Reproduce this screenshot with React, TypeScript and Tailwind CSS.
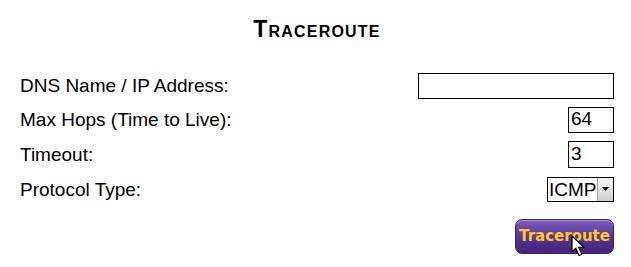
import React from "react";

const LABEL = "text-[19px] leading-none text-black";

function Row({ label, children, className = "" }: { label: string; children: React.ReactNode; className?: string }) {
  return (
    <div className={`flex items-center justify-between ${className}`}>
      <span className={LABEL}>{label}</span>
      {children}
    </div>
  );
}

function Cursor() {
  return (
    <svg className="pointer-events-none absolute left-[55px] top-[15px]" width="15" height="22" viewBox="0 0 15 22">
      <path d="M1 1 L1 17 L4.8 13.3 L8 20.5 L10.8 19.3 L7.7 12.3 L13 12.3 Z" fill="#fff" stroke="#000" strokeWidth="1.2" strokeLinejoin="round" />
    </svg>
  );
}

export default function App() {
  return (
    <div className="h-[267px] w-[631px] bg-white pl-[20px] pr-[17px] pt-[12px]" style={{ fontFamily: '"Liberation Sans", Arial, sans-serif' }}>
      <h1 className="text-center text-[23px] font-bold tracking-[1.2px] text-black [font-variant:small-caps]">Traceroute</h1>

      <div className="mt-[26px] flex flex-col gap-[8px]">
        <Row label="DNS Name / IP Address:">
          <input className="h-[26px] w-[196px] border border-black px-[2px] text-[19px] outline-none" defaultValue="" />
        </Row>
        <Row label="Max Hops (Time to Live):">
          <input className="h-[26px] w-[46px] border border-black px-[2px] text-[19px] outline-none" defaultValue="64" />
        </Row>
        <Row label="Timeout:">
          <input className="h-[27px] w-[46px] border border-black px-[2px] text-[19px] outline-none" defaultValue="3" />
        </Row>
        <Row label="Protocol Type:" className="mt-[1px]">
          <div className="flex h-[25px] w-[67px] items-center border border-black bg-white">
            <span className="flex-1 pl-[1px] text-[19px] leading-none">ICMP</span>
            <div className="flex h-full w-[16px] items-center justify-center border-l border-[#a0a0a0] bg-gradient-to-b from-[#f4f4f4] to-[#d0d0d0]">
              <svg width="7" height="4" viewBox="0 0 7 4"><path d="M0 0 H7 L3.5 4 Z" fill="#000" /></svg>
            </div>
          </div>
        </Row>
      </div>

      <div className="mt-[17px] flex justify-end">
        <button className="relative h-[35px] w-[99px] rounded-[7px] border border-[#3a2068] bg-gradient-to-b from-[#7b5cb8] via-[#583795] to-[#45237c] text-[15px] font-bold text-[#ffc928] shadow-[inset_0_1px_0_rgba(255,255,255,0.35)]" style={{ fontFamily: '"DejaVu Sans", Verdana, sans-serif' }}>
          Traceroute
          <Cursor />
        </button>
      </div>
    </div>
  );
}
